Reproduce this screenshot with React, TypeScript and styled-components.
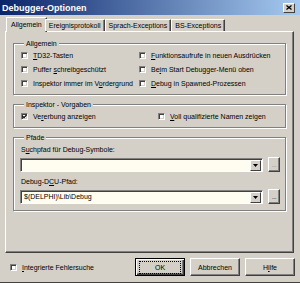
import React from "react";
import styled, { createGlobalStyle, css } from "styled-components";

const face = "#d4d0c8";
const shadow = "#808080";
const dark = "#404040";

const Global = createGlobalStyle`
  html, body { margin: 0; padding: 0; background: ${face}; }
  body {
    font-family: "Liberation Sans", Arial, sans-serif;
    font-size: 7px;
    color: #000;
  }
`;

const Window = styled.div`
  width: 300px;
  height: 283px;
  background: ${face};
  display: flex;
  flex-direction: column;
  overflow: hidden;
  box-sizing: border-box;
  border-bottom: 1px solid ${dark};
`;

const TitleBar = styled.div`
  height: 15px;
  flex: 0 0 auto;
  display: flex;
  align-items: center;
  justify-content: space-between;
  padding: 0 5px 0 2px;
  background: linear-gradient(to right, #0a246a, #a6caf0);
  color: #fff;
  font-weight: bold;
  font-size: 9px;
`;

const CloseButton = styled.div`
  width: 12px;
  height: 10px;
  box-sizing: border-box;
  background: ${face};
  border: 1px solid;
  border-color: #fff ${dark} ${dark} #fff;
  display: flex;
  align-items: center;
  justify-content: center;
`;

const Content = styled.div`
  flex: 1;
  display: flex;
  flex-direction: column;
  padding: 2px 6px 0 5px;
`;

const TabStrip = styled.div`
  display: flex;
  align-items: flex-end;
  height: 14px;
  padding-left: 3px;
  position: relative;
  z-index: 1;
`;

const Tab = styled.div<{ $active?: boolean }>`
  height: 12px;
  box-sizing: border-box;
  padding: 0 3px;
  display: flex;
  align-items: center;
  white-space: nowrap;
  border-top: 1px solid #fff;
  border-left: 1px solid #fff;
  border-right: 1px solid ${dark};
  box-shadow: inset -1px 0 0 ${shadow};
  border-radius: 1px 1px 0 0;
  background: ${face};
  ${(p) =>
    p.$active &&
    css`
      height: 15px;
      margin: 0 -2px -1px 0;
      margin-left: -2px;
      padding: 0 4px 1px;
      & + * {
        margin-left: 0;
      }
    `}
`;

const Panel = styled.div`
  height: 222px;
  box-sizing: border-box;
  border: 1px solid;
  border-color: #fff ${dark} ${dark} #fff;
  box-shadow: inset -1px -1px 0 ${shadow};
  padding: 0 7px;
  display: flex;
  flex-direction: column;
`;

const Group = styled.fieldset<{ $top: number }>`
  margin: ${(p) => p.$top}px 0 0;
  padding: 3px 5px 6px 6px;
  min-width: 0;
  border: 1px solid ${shadow};
  box-shadow: inset 1px 1px 0 #fff, 1px 1px 0 #fff;
  display: flex;
  flex-direction: column;
`;

const Legend = styled.legend`
  padding: 0 2px;
  margin-left: 4px;
  line-height: 9px;
  background: ${face};
`;

const CheckGrid = styled.div<{ $col: number }>`
  display: grid;
  grid-template-columns: ${(p) => p.$col}px 1fr;
  grid-auto-rows: 9px;
  row-gap: 5px;
  padding-left: 1px;
`;

const CheckRow = styled.div`
  display: flex;
  align-items: center;
  gap: 5px;
  white-space: nowrap;
  line-height: 9px;
`;

const Box = styled.span`
  width: 7px;
  height: 7px;
  flex: 0 0 auto;
  box-sizing: border-box;
  background: #fff;
  border: 1px solid;
  border-color: ${shadow} #fff #fff ${shadow};
  box-shadow: inset 1px 1px 0 ${dark}, inset -1px -1px 0 ${face};
  display: flex;
  align-items: center;
  justify-content: center;
`;

const Field = styled.div`
  display: flex;
  flex-direction: column;
  gap: 3px;
  & + & {
    margin-top: 5px;
  }
`;

const FieldLabel = styled.div`
  line-height: 9px;
  padding-left: 1px;
`;

const ComboRow = styled.div`
  display: flex;
  align-items: center;
  gap: 5px;
`;

const Combo = styled.div`
  flex: 0 0 243px;
  height: 14px;
  box-sizing: border-box;
  background: #fffdf0;
  border: 1px solid;
  border-color: ${shadow} #fff #fff ${shadow};
  box-shadow: inset 1px 1px 0 ${dark};
  display: flex;
  align-items: center;
  padding: 0 1px 0 3px;
`;

const ComboText = styled.span`
  flex: 1;
  line-height: 9px;
  white-space: nowrap;
`;

const DropButton = styled.span`
  width: 11px;
  height: 11px;
  margin-top: 1px;
  box-sizing: border-box;
  background: ${face};
  border: 1px solid;
  border-color: #fff ${dark} ${dark} #fff;
  display: flex;
  align-items: center;
  justify-content: center;
`;

const DotsButton = styled.span<{ $disabled?: boolean }>`
  width: 12px;
  height: 15px;
  box-sizing: border-box;
  background: ${face};
  border: 1px solid;
  border-color: #fff ${dark} ${dark} #fff;
  box-shadow: inset -1px -1px 0 ${shadow};
  display: flex;
  align-items: center;
  justify-content: center;
  color: ${(p) => (p.$disabled ? "#9a9890" : "#404040")};
  font-size: 7px;
  letter-spacing: -0.5px;
`;

const Footer = styled.div`
  display: flex;
  align-items: center;
  padding: 5px 0 0 5px;
  margin-right: -1px;
`;

const FooterCheck = styled(CheckRow)`
  flex: 1;
`;

const Button = styled.div<{ $default?: boolean }>`
  width: 50px;
  height: 18px;
  box-sizing: border-box;
  margin-left: 5px;
  display: flex;
  align-items: center;
  justify-content: center;
  background: ${face};
  border: 1px solid;
  border-color: #fff ${dark} ${dark} #fff;
  box-shadow: inset -1px -1px 0 ${shadow};
  ${(p) =>
    p.$default &&
    css`
      border: 1px solid #000;
      box-shadow: inset 1px 1px 0 #fff, inset -1px -1px 0 ${dark},
        inset -2px -2px 0 ${shadow};
      & > span {
        outline: 1px dotted #000;
        outline-offset: 0;
        width: 40px;
        height: 11px;
        display: flex;
        align-items: center;
        justify-content: center;
      }
    `}
`;

const U = styled.span`
  text-decoration: underline;
`;

function Check({ checked }: { checked?: boolean }) {
  return (
    <Box>
      {checked && (
        <svg width="5" height="5" viewBox="0 0 5 5">
          <path d="M0.5 2.2 L2 3.7 L4.6 0.9" stroke="#000" strokeWidth="1.2" fill="none" />
        </svg>
      )}
    </Box>
  );
}

function CheckItem({ children, checked }: { children: React.ReactNode; checked?: boolean }) {
  return (
    <CheckRow>
      <Check checked={checked} />
      <span>{children}</span>
    </CheckRow>
  );
}

function Arrow() {
  return (
    <svg width="5" height="3" viewBox="0 0 5 3">
      <path d="M0 0 H5 L2.5 3 Z" fill="#000" />
    </svg>
  );
}

export default function App() {
  return (
    <>
      <Global />
      <Window>
        <TitleBar>
          <span>Debugger-Optionen</span>
          <CloseButton>
            <svg width="6" height="5" viewBox="0 0 6 5">
              <path d="M0.5 0.5 L5.5 4.5 M5.5 0.5 L0.5 4.5" stroke="#000" strokeWidth="1.3" />
            </svg>
          </CloseButton>
        </TitleBar>
        <Content>
          <TabStrip>
            <Tab $active>Allgemein</Tab>
            <Tab>Ereignisprotokoll</Tab>
            <Tab>Sprach-Exceptions</Tab>
            <Tab>BS-Exceptions</Tab>
          </TabStrip>
          <Panel>
            <Group $top={7}>
              <Legend>Allgemein</Legend>
              <CheckGrid $col={118}>
                <CheckItem>
                  <U>T</U>D32-Tasten
                </CheckItem>
                <CheckItem>
                  <U>F</U>unktionsaufrufe in neuen Ausdrücken
                </CheckItem>
                <CheckItem>
                  Puffer <U>s</U>chreibgeschützt
                </CheckItem>
                <CheckItem>
                  Be<U>i</U>m Start Debugger-Menü oben
                </CheckItem>
                <CheckItem>
                  Inspektor immer im V<U>o</U>rdergrund
                </CheckItem>
                <CheckItem>
                  <U>D</U>ebug in Spawned-Prozessen
                </CheckItem>
              </CheckGrid>
            </Group>
            <Group $top={5}>
              <Legend>Inspektor - Vorgaben</Legend>
              <CheckGrid $col={137}>
                <CheckItem checked>
                  Ve<U>r</U>erbung anzeigen
                </CheckItem>
                <CheckItem>
                  <U>V</U>oll qualifizierte Namen zeigen
                </CheckItem>
              </CheckGrid>
            </Group>
            <Group $top={5}>
              <Legend>Pfade</Legend>
              <Field>
                <FieldLabel>
                  S<U>u</U>chpfad für Debug-Symbole:
                </FieldLabel>
                <ComboRow>
                  <Combo>
                    <ComboText />
                    <DropButton>
                      <Arrow />
                    </DropButton>
                  </Combo>
                  <DotsButton $disabled>...</DotsButton>
                </ComboRow>
              </Field>
              <Field>
                <FieldLabel>
                  Debug-D<U>C</U>U-Pfad:
                </FieldLabel>
                <ComboRow>
                  <Combo>
                    <ComboText>$(DELPHI)\Lib\Debug</ComboText>
                    <DropButton>
                      <Arrow />
                    </DropButton>
                  </Combo>
                  <DotsButton>...</DotsButton>
                </ComboRow>
              </Field>
            </Group>
          </Panel>
          <Footer>
            <FooterCheck>
              <Check />
              <span>
                <U>I</U>ntegrierte Fehlersuche
              </span>
            </FooterCheck>
            <Button $default>
              <span>OK</span>
            </Button>
            <Button>Abbrechen</Button>
            <Button>
              <span>
                H<U>i</U>lfe
              </span>
            </Button>
          </Footer>
        </Content>
      </Window>
    </>
  );
}
